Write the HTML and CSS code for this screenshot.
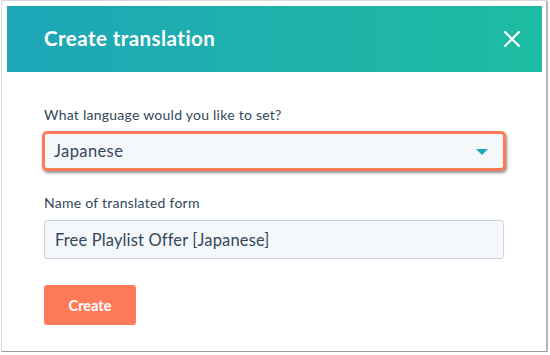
FILE: index.html
```html
<!DOCTYPE html>
<html>
<head>
<meta charset="utf-8">
<link rel="stylesheet" href="styles.css">
</head>
<body>
<div class="window">
  <div class="header">
    <h1 class="title">Create translation</h1>
    <button class="close" aria-label="Close">
      <svg width="16" height="16" viewBox="0 0 16 16"><path d="M1 1L15 15M15 1L1 15" stroke="#fff" stroke-width="2.2" stroke-linecap="square" fill="none"/></svg>
    </button>
  </div>
  <div class="body">
    <div class="field">
      <label class="label">What language would you like to set?</label>
      <div class="select">
        <span class="value">Japanese</span>
        <svg class="caret" width="12" height="6" viewBox="0 0 12 6"><path d="M0 0H12L6 6Z" fill="#22a6b6"/></svg>
      </div>
    </div>
    <div class="field">
      <label class="label">Name of translated form</label>
      <div class="input">Free Playlist Offer [Japanese]</div>
    </div>
    <div class="actions">
      <button class="btn">Create</button>
    </div>
  </div>
</div>
</body>
</html>
```
FILE: styles.css
```css
html, body { margin: 0; padding: 0; background: #fff; }
body { font-family: Lato, "Open Sans", sans-serif; color: #33475b; }
.window {
  margin-left: 1px;
  width: 546px;
  height: 352px;
  box-sizing: border-box;
  border: 1px solid #dadada;
  border-right-color: #b5b5b5;
  border-bottom-color: #9a9a9a;
  box-shadow: 1px 1px 1px rgba(0,0,0,0.25);
  padding: 5px 4px 0 5px;
  background: #fff;
}
.header {
  height: 66px;
  box-sizing: border-box;
  display: flex;
  align-items: center;
  justify-content: space-between;
  padding: 0 22px 2px 37px;
  background: linear-gradient(to right, #1ea6b7, #1ebca2);
}
.title {
  margin: 0;
  font-size: 20.5px;
  font-weight: 700;
  color: #fff;
  letter-spacing: 0.45px;
}
.close {
  border: 0; background: none; padding: 0; width: 16px; height: 16px; display: flex;
  margin-top: 2px;
}
.body {
  padding: 33px 38px 0 37px;
  display: flex;
  flex-direction: column;
  gap: 22px;
}
.field { display: flex; flex-direction: column; gap: 6px; }
.label { font-size: 14px; line-height: 20px; letter-spacing: 0.25px; }
.select {
  margin: 0 -2px;
  height: 40px;
  box-sizing: border-box;
  border: 3px solid #ff7a59;
  border-radius: 5px;
  background: #f5f8fa;
  box-shadow: 1px 2px 3px rgba(0,0,0,0.45);
  display: flex;
  align-items: center;
  justify-content: space-between;
  padding: 0 15px 0 9px;
  font-size: 16.5px;
  letter-spacing: 0.4px;
}
.caret { margin-top: 1px; }
.input {
  margin-top: 1px;
  height: 39px;
  box-sizing: border-box;
  border: 1px solid #cbd6e2;
  border-radius: 3px;
  background: #f5f8fa;
  display: flex;
  align-items: center;
  padding: 0 10px;
  font-size: 16.5px;
  letter-spacing: 0.15px;
}
.actions { padding-top: 4px; }
.btn {
  width: 92px;
  height: 40px;
  border: 0;
  border-radius: 3px;
  background: #ff7a59;
  color: #fff;
  font-family: Lato, sans-serif;
  font-weight: 700;
  font-size: 14.5px;
  padding-top: 1px;
}
```
